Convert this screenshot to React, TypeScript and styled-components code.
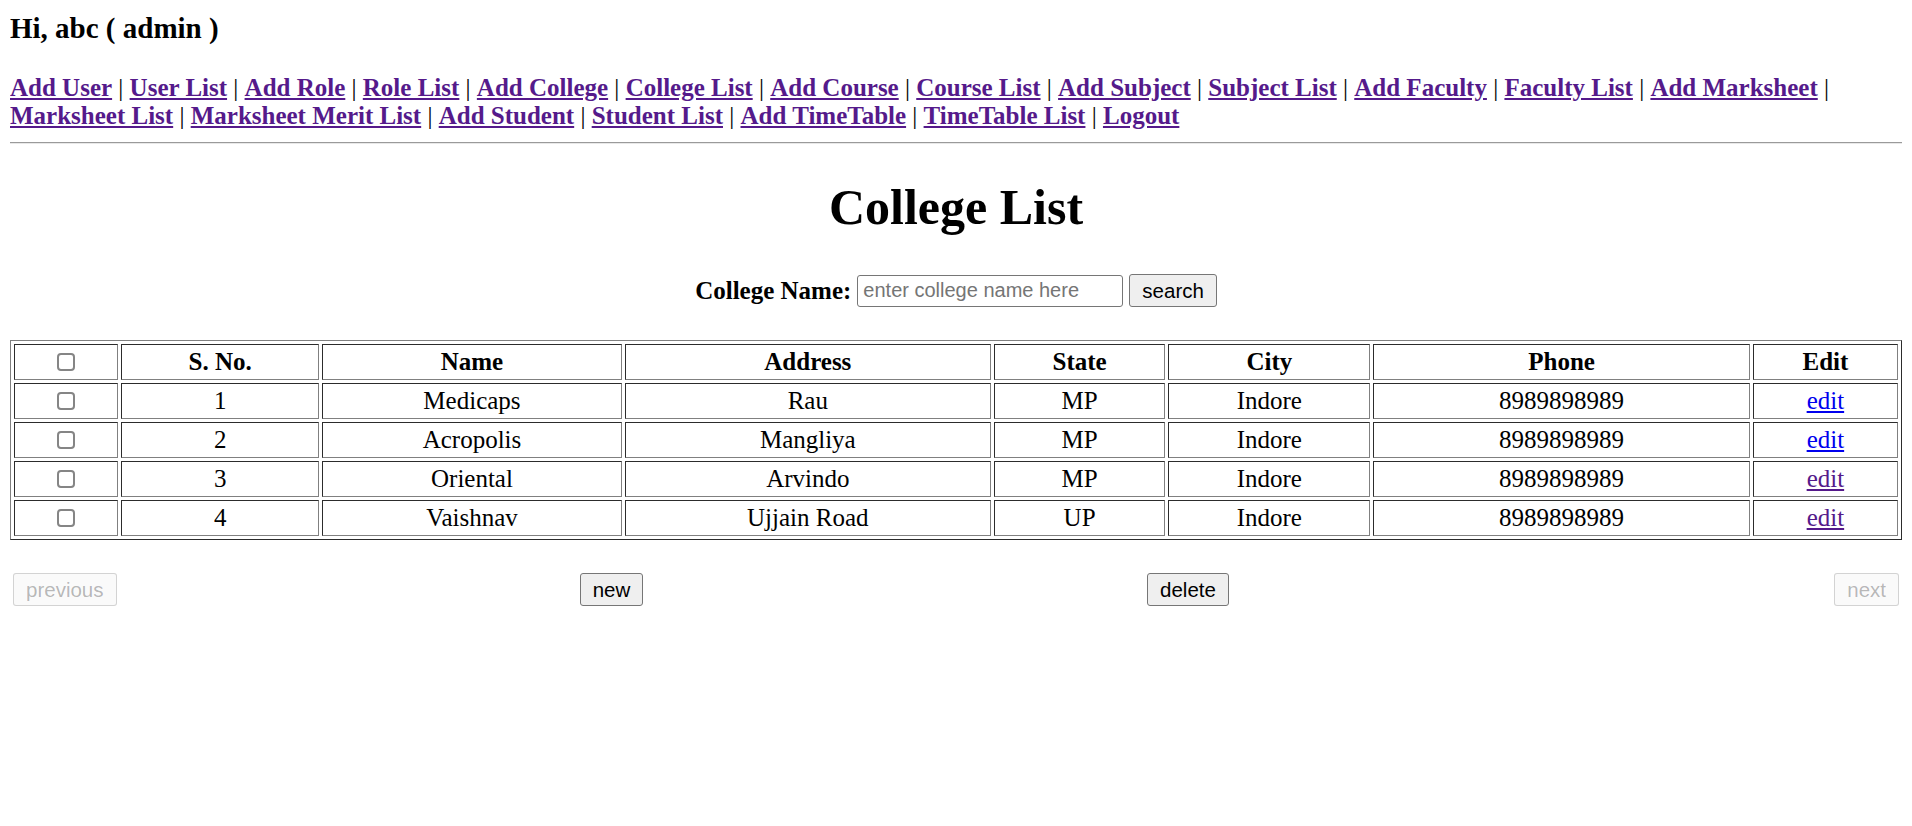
import React from 'react';
import styled, { createGlobalStyle } from 'styled-components';

const GlobalStyle = createGlobalStyle`
	body {
		margin: 10px;
		background: #fff;
		color: #000;
		font-family: 'Liberation Serif', 'Times New Roman', serif;
		font-size: 25px;
	}
`;

const Greeting = styled.h3`
	margin: 2px 0 29px;
	font-size: 29px;
	font-weight: bold;
`;

const Nav = styled.div`
	font-size: 25px;
	line-height: 28px;
`;

const NavLink = styled.a`
	color: #551a8b;
	font-weight: bold;
	text-decoration: underline;
`;

const Divider = styled.hr`
	margin: 12px 0 0;
	height: 0;
	border: none;
	border-top: 1px solid #9a9a9a;
	border-bottom: 1px solid #e8e8e8;
`;

const Title = styled.h1`
	margin: 34px 0 0;
	text-align: center;
	font-size: 50px;
	font-weight: bold;
`;

const SearchForm = styled.form`
	display: flex;
	justify-content: center;
	align-items: center;
	gap: 6px;
	margin-top: 38px;
	height: 33px;
`;

const Label = styled.label`
	font-weight: bold;
`;

const TextInput = styled.input`
	box-sizing: border-box;
	width: 266px;
	height: 32px;
	padding: 1px 5px;
	border: 1px solid #767676;
	border-radius: 3px;
	font-family: 'Liberation Sans', Arial, sans-serif;
	font-size: 20px;

	&::placeholder {
		color: #757575;
	}
`;

const Button = styled.button`
	box-sizing: border-box;
	height: 33px;
	padding: 0 12px;
	background: #efefef;
	border: 1px solid #767676;
	border-radius: 3px;
	color: #000;
	font-family: 'Liberation Sans', Arial, sans-serif;
	font-size: 20.5px;

	&:disabled {
		color: rgba(16, 16, 16, 0.3);
		background: rgba(239, 239, 239, 0.3);
		border-color: rgba(118, 118, 118, 0.3);
	}
`;

const Table = styled.table`
	width: 100%;
	margin-top: 33px;
	table-layout: fixed;
	border: 1px outset #808080;
	border-spacing: 3px;
`;

const Cell = styled.td`
	height: 34px;
	padding: 0 1px;
	border: 1px inset #808080;
	text-align: center;
	font-size: 25px;
`;

const HeadCell = styled(Cell).attrs({ as: 'th' })`
	font-weight: bold;
`;

const Check = styled.input.attrs({ type: 'checkbox' })`
	appearance: none;
	display: block;
	box-sizing: border-box;
	width: 18px;
	height: 18px;
	margin: 0 auto;
	background: #fff;
	border: 2px solid #858585;
	border-radius: 4px;
`;

const EditLink = styled.a<{ $visited?: boolean }>`
	color: ${({ $visited }) => ($visited ? '#551a8b' : '#0000ee')};
	text-decoration: underline;
`;

const Pager = styled.div`
	display: grid;
	grid-template-columns: 287px 623px 530px 1fr;
	align-items: center;
	margin-top: 33px;
	padding: 0 3px;
`;

const PagerSlot = styled.div<{ $align: string }>`
	display: flex;
	justify-content: ${({ $align }) => $align};
`;

const links = [
	'Add User',
	'User List',
	'Add Role',
	'Role List',
	'Add College',
	'College List',
	'Add Course',
	'Course List',
	'Add Subject',
	'Subject List',
	'Add Faculty',
	'Faculty List',
	'Add Marksheet',
	'Marksheet List',
	'Marksheet Merit List',
	'Add Student',
	'Student List',
	'Add TimeTable',
	'TimeTable List',
	'Logout',
];

const colleges = [
	{ name: 'Medicaps', address: 'Rau', state: 'MP', city: 'Indore', phone: '8989898989' },
	{ name: 'Acropolis', address: 'Mangliya', state: 'MP', city: 'Indore', phone: '8989898989' },
	{ name: 'Oriental', address: 'Arvindo', state: 'MP', city: 'Indore', phone: '8989898989' },
	{ name: 'Vaishnav', address: 'Ujjain Road', state: 'UP', city: 'Indore', phone: '8989898989' },
];

const widths = [104, 198, 299, 366, 171, 202, 376, 145];

const App = () => {
	return (
		<>
			<GlobalStyle />
			<Greeting>Hi, abc ( admin )</Greeting>
			<Nav>
				{links.map((label, i) => (
					<React.Fragment key={label}>
						<NavLink href='#'>{label}</NavLink>
						{i < links.length - 1 && ' | '}
					</React.Fragment>
				))}
			</Nav>
			<Divider />

			<Title>College List</Title>

			<SearchForm onSubmit={(e) => e.preventDefault()}>
				<Label>College Name:</Label>
				<TextInput placeholder='enter college name here' />
				<Button type='submit'>search</Button>
			</SearchForm>

			<Table>
				<colgroup>
					{widths.map((w, i) => (
						<col key={i} style={{ width: w }} />
					))}
				</colgroup>
				<thead>
					<tr>
						<HeadCell>
							<Check />
						</HeadCell>
						<HeadCell>S. No.</HeadCell>
						<HeadCell>Name</HeadCell>
						<HeadCell>Address</HeadCell>
						<HeadCell>State</HeadCell>
						<HeadCell>City</HeadCell>
						<HeadCell>Phone</HeadCell>
						<HeadCell>Edit</HeadCell>
					</tr>
				</thead>
				<tbody>
					{colleges.map((c, i) => (
						<tr key={c.name}>
							<Cell>
								<Check />
							</Cell>
							<Cell>{i + 1}</Cell>
							<Cell>{c.name}</Cell>
							<Cell>{c.address}</Cell>
							<Cell>{c.state}</Cell>
							<Cell>{c.city}</Cell>
							<Cell>{c.phone}</Cell>
							<Cell>
								<EditLink href='#' $visited={i > 1}>
									edit
								</EditLink>
							</Cell>
						</tr>
					))}
				</tbody>
			</Table>

			<Pager>
				<PagerSlot $align='flex-start'>
					<Button disabled>previous</Button>
				</PagerSlot>
				<PagerSlot $align='center'>
					<Button>new</Button>
				</PagerSlot>
				<PagerSlot $align='center'>
					<Button>delete</Button>
				</PagerSlot>
				<PagerSlot $align='flex-end'>
					<Button disabled>next</Button>
				</PagerSlot>
			</Pager>
		</>
	);
};

export default App;
